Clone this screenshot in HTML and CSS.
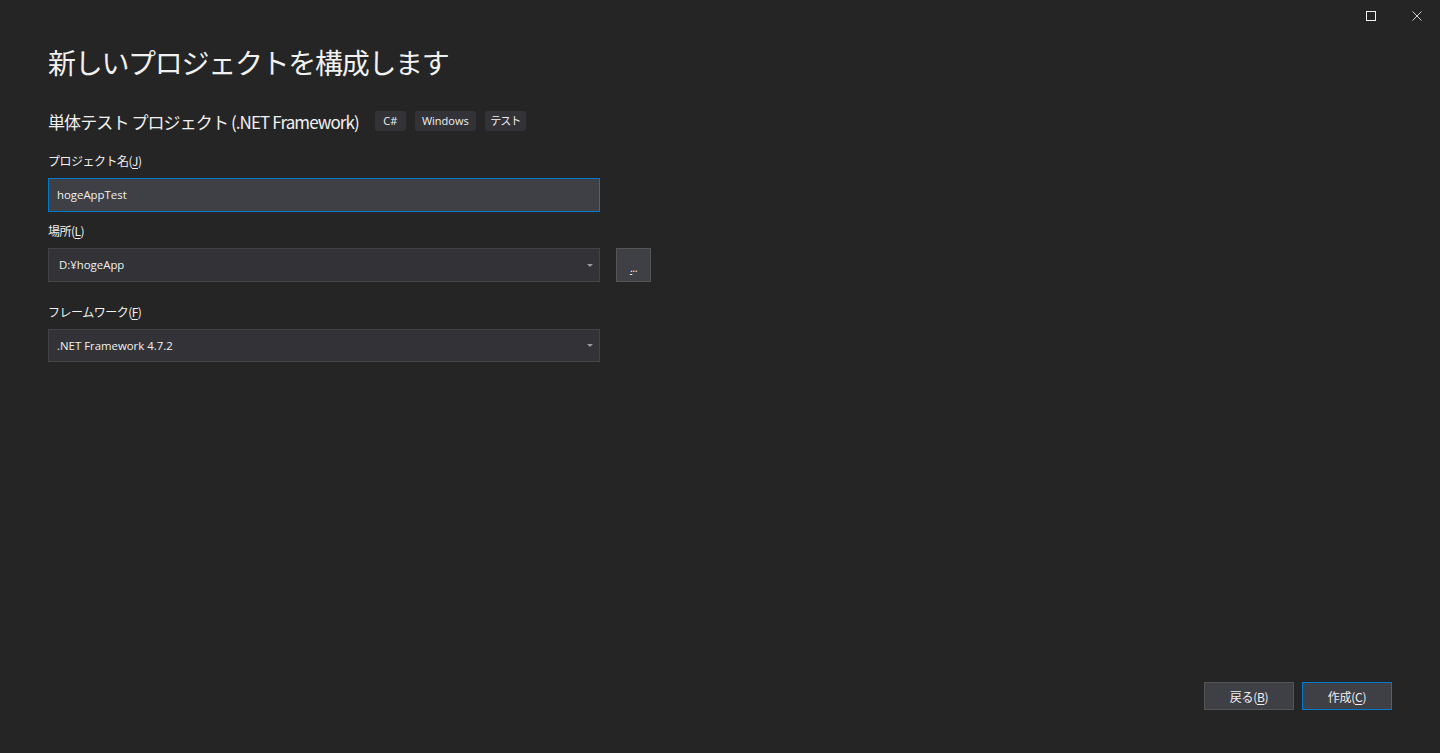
FILE: index.html
```html
<!DOCTYPE html>
<html lang="ja">
<head>
<meta charset="utf-8">
<title>新しいプロジェクトを構成します</title>
<link rel="stylesheet" href="styles.css">
</head>
<body>
<div class="window">
  <div class="titlebar">
    <div class="ctrl">
      <svg width="10" height="10" viewBox="0 0 10 10"><rect x="0.5" y="0.5" width="9" height="9" fill="none" stroke="#f1f1f1" stroke-width="1"/></svg>
    </div>
    <div class="ctrl">
      <svg width="10" height="10" viewBox="0 0 10 10"><path d="M0.5 0.5 L9.5 9.5 M9.5 0.5 L0.5 9.5" stroke="#d0d0d0" stroke-width="1"/></svg>
    </div>
  </div>
  <main class="content">
    <h1 class="title">新しいプロジェクトを構成します</h1>
    <div class="subtitle-row">
      <h2 class="subtitle">単体テスト プロジェクト (.NET Framework)</h2>
      <span class="tag tag-cs">C#</span>
      <span class="tag tag-win">Windows</span>
      <span class="tag tag-test">テスト</span>
    </div>

    <div class="field field-name">
      <label class="label">プロジェクト名(<u>J</u>)</label>
      <div class="input focused">hogeAppTest</div>
    </div>

    <div class="field field-loc">
      <label class="label">場所(<u>L</u>)</label>
      <div class="row">
        <div class="combo"><span>D:¥hogeApp</span><span class="arrow"></span></div>
        <div class="browse"><span><u>.</u>..</span></div>
      </div>
    </div>

    <div class="field field-fw">
      <label class="label">フレームワーク(<u>F</u>)</label>
      <div class="combo"><span>.NET Framework 4.7.2</span><span class="arrow"></span></div>
    </div>
  </main>
  <footer class="footer">
    <button class="btn">戻る(<u>B</u>)</button>
    <button class="btn primary">作成(<u>C</u>)</button>
  </footer>
</div>
</body>
</html>
```

FILE: styles.css
```css
html, body {
  margin: 0;
  padding: 0;
  background: #252526;
  height: 100%;
}
body {
  font-family: "Open Sans", "Noto Sans CJK JP", sans-serif;
  color: #f1f1f1;
}
.window {
  height: 753px;
  display: flex;
  flex-direction: column;
  box-sizing: border-box;
}
.titlebar {
  height: 32px;
  display: flex;
  justify-content: flex-end;
  align-items: center;
  flex: none;
}
.ctrl {
  width: 46px;
  height: 32px;
  display: flex;
  align-items: center;
  justify-content: center;
}
.content {
  padding: 0 48px;
  flex: 1;
}
.title {
  margin: 8px 0 0 0;
  font-family: "Noto Sans CJK JP", sans-serif;
  font-weight: 400;
  font-size: 28px;
  line-height: 44px;
  color: #f1f1f1;
  letter-spacing: -1.3px;
}
.subtitle-row {
  display: flex;
  align-items: center;
  margin-top: 25px;
  height: 24px;
}
.subtitle {
  margin: 0 16px 0 0;
  font-family: "Noto Sans CJK JP", sans-serif;
  font-weight: 400;
  font-size: 17px;
  letter-spacing: -0.9px;
  color: #f1f1f1;
}
.tag {
  font-family: "Open Sans", "Noto Sans CJK JP", sans-serif;
  font-size: 11px;
  height: 20px;
  line-height: 20px;
  padding: 0;
  margin-right: 9px;
  background: #333337;
  border-radius: 3px;
  color: #f1f1f1;
  text-align: center;
  white-space: nowrap;
}
.tag-cs { width: 31px; }
.tag-win { width: 61px; }
.tag-test { width: 41px; letter-spacing: -1px; }
.field-name {
  margin-top: 19px;
}
.field-loc {
  margin-top: 10px;
}
.field-fw {
  margin-top: 21px;
}
.label {
  display: block;
  font-family: "Noto Sans CJK JP", sans-serif;
  font-size: 12px;
  line-height: 18px;
  letter-spacing: -0.5px;
  color: #f1f1f1;
  margin-bottom: 8px;
}
.label u, .btn u {
  text-decoration: underline;
  text-underline-offset: 2px;
}
.input {
  width: 552px;
  height: 34px;
  box-sizing: border-box;
  border: 1px solid #007acc;
  background: #3f3f46;
  font-size: 11.4px;
  line-height: 32px;
  padding: 0 8px;
  color: #f1f1f1;
}
.row {
  display: flex;
  align-items: flex-start;
  gap: 16px;
}
.combo {
  width: 552px;
  height: 34px;
  box-sizing: border-box;
  border: 1px solid #434346;
  background: #333337;
  font-size: 11.4px;
  line-height: 32px;
  padding: 0 6px 0 10px;
  display: flex;
  justify-content: space-between;
  align-items: center;
  color: #f1f1f1;
}
.field-fw .combo {
  height: 33px;
  padding-left: 8px;
}
.arrow {
  width: 0;
  height: 0;
  border-left: 3px solid transparent;
  border-right: 3px solid transparent;
  border-top: 3px solid #999999;
}
.browse {
  width: 35px;
  height: 34px;
  box-sizing: border-box;
  border: 1px solid #555555;
  background: #3f3f46;
  display: flex;
  justify-content: center;
  align-items: center;
  font-size: 11px;
  color: #f1f1f1;
}
.browse span {
  margin-top: 4px;
  letter-spacing: -0.5px;
}
.browse u {
  text-decoration: underline;
  text-underline-offset: 2px;
}
.footer {
  display: flex;
  justify-content: flex-end;
  gap: 8px;
  padding: 0 48px 43px 0;
  flex: none;
}
.btn {
  width: 90px;
  height: 28px;
  box-sizing: border-box;
  border: 1px solid #555555;
  background: #3f3f46;
  color: #f1f1f1;
  font-family: "Noto Sans CJK JP", sans-serif;
  font-size: 12px;
  padding: 0;
  letter-spacing: -0.3px;
}
.btn.primary {
  border-color: #007acc;
}
```
